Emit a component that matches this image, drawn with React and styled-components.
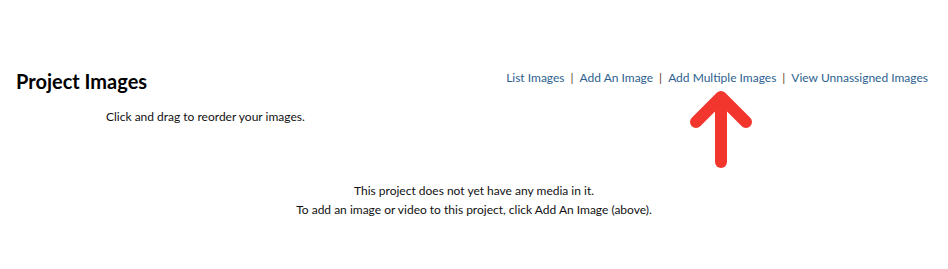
import React from 'react';
import styled, { createGlobalStyle } from 'styled-components';

const GlobalStyle = createGlobalStyle`
  body {
    margin: 0;
    background: #fff;
    font-family: Lato, "Open Sans", sans-serif;
    color: #111;
  }
`

const Page = styled.div`
  position: relative;
  width: 948px;
  height: 269px;
  padding-top: 66px;
  box-sizing: border-box;
`

const Header = styled.div`
  display: flex;
  justify-content: space-between;
  align-items: flex-start;
  padding: 0 20px 0 16px;
`

const Title = styled.h1`
  margin: 3px 0 0;
  font-size: 20px;
  font-weight: 700;
  line-height: 24px;
  color: #000;
`

const Links = styled.nav`
  display: flex;
  align-items: center;
  font-size: 12px;
  line-height: 24px;
`

const Link = styled.a`
  color: #2d5f8f;
  text-decoration: none;
  cursor: pointer;
`

const Sep = styled.span`
  color: #5e3d1c;
  margin: 0 6px;
`

const Hint = styled.p`
  margin: 15px 0 0 106px;
  font-size: 12px;
  line-height: 18px;
  color: #111;
`

const Empty = styled.div`
  margin-top: 55px;
  text-align: center;
  font-size: 12px;
  line-height: 19px;
  color: #111;
`

const Arrow = styled.svg`
  position: absolute;
  left: 686px;
  top: 86px;
`

const links = ['List Images', 'Add An Image', 'Add Multiple Images', 'View Unnassigned Images']

function App() {
  return (
    <Page>
      <GlobalStyle />
      <Header>
        <Title>Project Images</Title>
        <Links>
          {links.map((l, i) => (
            <React.Fragment key={l}>
              {i > 0 && <Sep>|</Sep>}
              <Link>{l}</Link>
            </React.Fragment>
          ))}
        </Links>
      </Header>
      <Hint>Click and drag to reorder your images.</Hint>
      <Empty>
        This project does not yet have any media in it.<br />
        To add an image or video to this project, click Add An Image (above).
      </Empty>
      <Arrow width="70" height="84" viewBox="0 0 70 84">
        <g stroke="#f2362e" strokeWidth="12" strokeLinecap="round" strokeLinejoin="round" fill="none">
          <path d="M35 12 V76" />
          <path d="M10 36 L35 11 L60 36" />
        </g>
      </Arrow>
    </Page>
  )
}

export default App
